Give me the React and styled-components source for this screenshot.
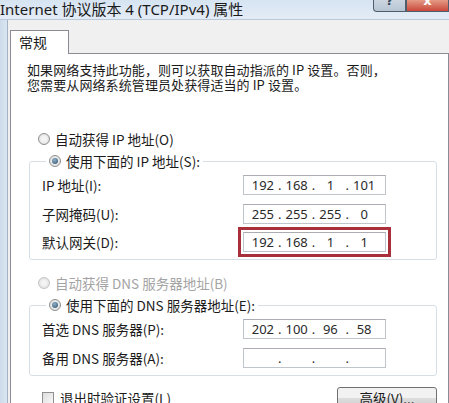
import React from 'react'
import styled, { createGlobalStyle } from 'styled-components'

const GlobalStyle = createGlobalStyle`
  html, body {
    margin: 0;
    padding: 0;
    background: #f0f0f0;
  }
  body {
    font-family: "Noto Sans CJK SC", "Noto Sans", sans-serif;
    color: #1b1b1b;
  }
`

const Window = styled.div`
  width: 449px;
  height: 403px;
  overflow: hidden;
  display: flex;
  flex-direction: column;
  background: #f0f0f0;
`

const TitleBar = styled.div`
  height: 19px;
  flex-shrink: 0;
  display: flex;
  justify-content: space-between;
  align-items: flex-start;
  background: linear-gradient(#d6e4f2, #e3ecf6);
  border-bottom: 1px solid #b9c9da;
`

const Title = styled.div`
  font-family: "Noto Sans", "Noto Sans CJK SC", sans-serif;
  font-size: 15px;
  line-height: 19px;
  color: #1a1a1a;
  white-space: nowrap;
`

const Controls = styled.div`
  display: flex;
`

const CaptionButton = styled.div`
  height: 11px;
  width: ${(p) => p.$w}px;
  border: 1px solid #4f5d6c;
  border-top: none;
  border-radius: ${(p) => (p.$close ? '0' : '0 0 0 4px')};
  background: ${(p) =>
    p.$close
      ? 'linear-gradient(#e59a86, #c9483a)'
      : 'linear-gradient(#cbd6e1, #b7c4d2)'};
  color: ${(p) => (p.$close ? '#fff' : '#3b4a5a')};
  font-family: "DejaVu Sans", sans-serif;
  font-size: 13px;
  font-weight: bold;
  line-height: 2px;
  text-align: center;
  overflow: hidden;
`

const Body = styled.div`
  flex: 1;
  display: flex;
  min-height: 0;
`

const Frame = styled.div`
  width: 7px;
  flex-shrink: 0;
  background: linear-gradient(90deg, #cddbea, #d9e5f1);
  border-right: 1px solid #a3b2c3;
`

const Client = styled.div`
  flex: 1;
  padding: 10px 0 0 2px;
  display: flex;
  flex-direction: column;
`

const TabStrip = styled.div`
  display: flex;
  height: 23px;
`

const Tab = styled.div`
  position: relative;
  z-index: 1;
  width: 59px;
  height: 24px;
  box-sizing: border-box;
  border: 1px solid #898c95;
  border-bottom: none;
  background: #fff;
  font-size: 14px;
  line-height: 22px;
  padding-left: 8px;
`

const Panel = styled.div`
  flex: 1;
  background: #fff;
  border: 1px solid #898c95;
  padding: 8px 10px 0 16px;
`

const Intro = styled.p`
  margin: 0;
  font-size: 13px;
  line-height: 15px;
  letter-spacing: 0.1px;
  white-space: nowrap;
`

const RadioRow = styled.label`
  display: flex;
  align-items: center;
  gap: 5px;
  height: 22px;
  font-size: 13.5px;
  color: ${(p) => (p.$disabled ? '#a4a4a4' : '#1b1b1b')};
  white-space: nowrap;
  margin-left: ${(p) => (p.$legend ? 0 : 11)}px;
  margin-top: ${(p) => p.$top || 0}px;
`

const RadioDot = styled.span`
  width: 12px;
  height: 12px;
  box-sizing: border-box;
  border-radius: 50%;
  border: 1px solid ${(p) => (p.$disabled ? '#c4c4c4' : '#8e8f8f')};
  background: radial-gradient(circle, #f4f4f4 30%, #d6d6d6 100%);
  display: flex;
  align-items: center;
  justify-content: center;

  &::after {
    content: '';
    display: ${(p) => (p.$checked ? 'block' : 'none')};
    width: 6px;
    height: 6px;
    border-radius: 50%;
    background: radial-gradient(circle at 40% 35%, #8fb0c8, #2c4e66);
  }
`

const Group = styled.fieldset`
  margin: 0 0 0 2px;
  width: 408px;
  box-sizing: border-box;
  border: 1px solid #d5dfe5;
  border-radius: 3px;
  padding: 3px 0 7px 12px;
  display: grid;
  grid-template-columns: 201px 143px;
  grid-auto-rows: 20px;
  row-gap: 8.5px;
  align-items: center;
`

const Legend = styled.legend`
  padding: 0 3px;
  margin-left: 4px;
`

const FieldLabel = styled.span`
  font-size: 13.5px;
  line-height: 20px;
  white-space: nowrap;
`

const IpBox = styled.div`
  height: 20px;
  box-sizing: border-box;
  border: 1px solid #c0c5cc;
  border-top-color: #abadb3;
  display: flex;
  align-items: center;
  padding: 0 6px 0 4px;
  font-family: "Noto Sans", sans-serif;
  font-size: 13px;
  color: #2a2a2a;
  outline: ${(p) => (p.$marked ? '3px solid #a9303a' : 'none')};
  outline-offset: 2px;
`

const Octet = styled.span`
  flex: 1;
  text-align: center;
`

const Dot = styled.span`
  width: 4px;
  text-align: center;
`

const Footer = styled.div`
  display: flex;
  justify-content: space-between;
  align-items: flex-start;
  width: 408px;
  margin: 11px 0 0 2px;
  padding-left: 13px;
  box-sizing: border-box;
`

const Check = styled.label`
  display: flex;
  align-items: center;
  gap: 6px;
  font-size: 13.5px;
  margin-top: 1px;
  white-space: nowrap;
`

const CheckBox = styled.span`
  width: 12px;
  height: 12px;
  box-sizing: border-box;
  border: 1px solid #8e8f8f;
  background: linear-gradient(135deg, #dcdcdc, #f8f8f8);
`

const Button = styled.div`
  width: 100px;
  height: 22px;
  box-sizing: border-box;
  border: 1px solid #707070;
  border-radius: 3px;
  background: linear-gradient(#f2f2f2 50%, #dddddd 50%, #cfcfcf);
  font-size: 13.5px;
  line-height: 20px;
  text-align: center;
`

const IpField = ({ value, marked }) => (
  <IpBox $marked={marked}>
    {value.map((v, i) => (
      <React.Fragment key={i}>
        {i > 0 && <Dot>.</Dot>}
        <Octet>{v}</Octet>
      </React.Fragment>
    ))}
  </IpBox>
)

const Radio = ({ checked, disabled, legend, top, children }) => (
  <RadioRow $disabled={disabled} $legend={legend} $top={top}>
    <RadioDot $checked={checked} $disabled={disabled} />
    {children}
  </RadioRow>
)

export default function App() {
  return (
    <>
      <GlobalStyle />
      <Window>
        <TitleBar>
          <Title>Internet 协议版本 4 (TCP/IPv4) 属性</Title>
          <Controls>
            <CaptionButton $w={31}>?</CaptionButton>
            <CaptionButton $w={41} $close>
              x
            </CaptionButton>
          </Controls>
        </TitleBar>
        <Body>
          <Frame />
          <Client>
            <TabStrip>
              <Tab>常规</Tab>
            </TabStrip>
            <Panel>
              <Intro>
                如果网络支持此功能，则可以获取自动指派的 IP 设置。否则，
                <br />
                您需要从网络系统管理员处获得适当的 IP 设置。
              </Intro>

              <Radio top={36}>自动获得 IP 地址(O)</Radio>
              <Group>
                <Legend>
                  <Radio checked legend>
                    使用下面的 IP 地址(S):
                  </Radio>
                </Legend>
                <FieldLabel>IP 地址(I):</FieldLabel>
                <IpField value={['192', '168', '1', '101']} />
                <FieldLabel>子网掩码(U):</FieldLabel>
                <IpField value={['255', '255', '255', '0']} />
                <FieldLabel>默认网关(D):</FieldLabel>
                <IpField value={['192', '168', '1', '1']} marked />
              </Group>

              <Radio disabled top={12}>
                自动获得 DNS 服务器地址(B)
              </Radio>
              <Group>
                <Legend>
                  <Radio checked legend>
                    使用下面的 DNS 服务器地址(E):
                  </Radio>
                </Legend>
                <FieldLabel>首选 DNS 服务器(P):</FieldLabel>
                <IpField value={['202', '100', '96', '58']} />
                <FieldLabel>备用 DNS 服务器(A):</FieldLabel>
                <IpField value={['', '', '', '']} />
              </Group>

              <Footer>
                <Check>
                  <CheckBox />
                  退出时验证设置(L)
                </Check>
                <Button>高级(V)...</Button>
              </Footer>
            </Panel>
          </Client>
        </Body>
      </Window>
    </>
  )
}
